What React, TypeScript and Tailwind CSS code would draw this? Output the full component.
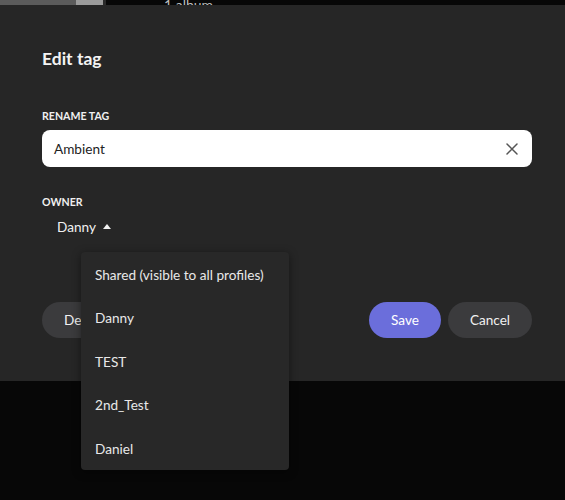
import React from 'react';

const owners = ['Shared (visible to all profiles)', 'Danny', 'TEST', '2nd_Test', 'Daniel'];

const App = () => (
  <div className="relative w-[565px] h-[500px] overflow-hidden bg-[#070707] font-['Lato',sans-serif] text-[#f0f0f0]">
    {/* page behind the modal */}
    <div className="flex h-[5px] overflow-hidden">
      <div className="w-[76px] bg-[#5b5b5b]" />
      <div className="w-[27px] bg-[#9b9b9b]" />
      <div className="w-[3px] bg-[#2a2a2a]" />
      <div className="ml-[58px] -mt-[4px] whitespace-nowrap text-[14px] leading-[18px] text-[#bdbdbd]">1 album</div>
    </div>

    <div className="h-[376px] bg-[#262626] pl-[42px] pr-[33px] pt-[42px]">
      <h2 className="text-[17.5px] leading-[24px] font-bold text-[#f4f4f4]">Edit tag</h2>

      <div className="mt-[38px] text-[10.6px] leading-[14px] font-bold uppercase">Rename tag</div>
      <div className="mt-[7px] flex h-[37px] items-center rounded-[8px] bg-white pl-[12px] pr-[14px]">
        <span className="flex-1 pt-[2px] text-[13.6px] text-[#222]">Ambient</span>
        <svg width="12" height="12" viewBox="0 0 12 12" className="text-[#555]">
          <path d="M1 1 L11 11 M11 1 L1 11" stroke="currentColor" strokeWidth="1.5" strokeLinecap="round" />
        </svg>
      </div>

      <div className="mt-[28px] text-[10.6px] leading-[14px] font-bold uppercase">Owner</div>
      <button className="mt-[7px] flex h-[20px] items-center gap-[7px] pl-[15px] text-[13.6px] leading-[20px]">
        <span className="pt-[1px]">Danny</span>
        <svg width="8" height="5" viewBox="0 0 8 5" className="mt-[1px]">
          <path d="M0 5 L4 0 L8 5 Z" fill="currentColor" />
        </svg>
      </button>

      <div className="mt-[66px] flex h-[36px] items-center justify-between">
        <button className="h-[36px] rounded-full bg-[#3b3b3d] px-[22px] pt-[1px] text-[13.6px]">Delete</button>
        <div className="flex gap-[7px]">
          <button className="h-[36px] w-[72px] rounded-full bg-[#6b6edb] pt-[1px] text-[13.6px] text-white">Save</button>
          <button className="h-[36px] w-[84px] rounded-full bg-[#3b3b3d] pt-[1px] text-[13.6px]">Cancel</button>
        </div>
      </div>
    </div>

    {/* owner menu */}
    <ul className="absolute left-[81px] top-[252px] w-[208px] rounded-[4px] bg-[#282828] shadow-[0_2px_10px_rgba(0,0,0,0.45)]">
      {owners.map((o) => (
        <li key={o} className="flex h-[43.6px] items-center whitespace-nowrap px-[14px] pt-[2px] text-[13.6px] text-[#e8e8e8]">
          {o}
        </li>
      ))}
    </ul>
  </div>
);

export default App;
